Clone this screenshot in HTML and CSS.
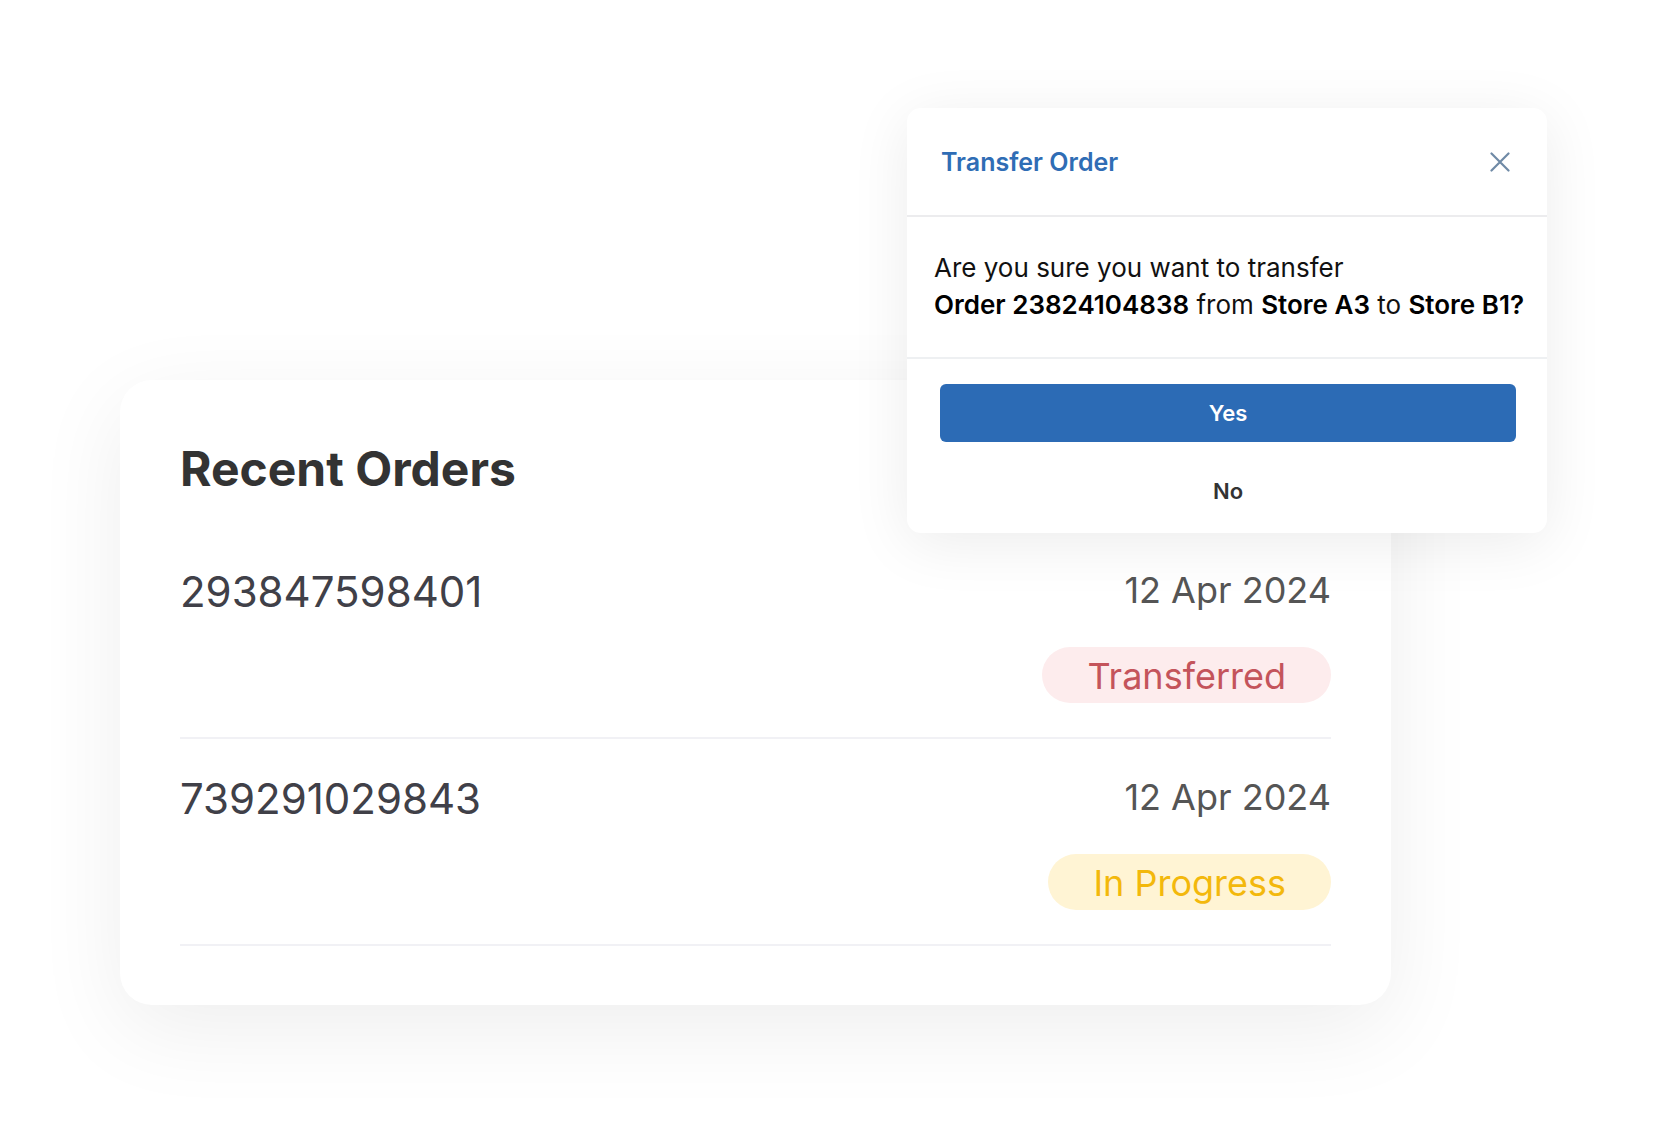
FILE: index.html
```html
<!DOCTYPE html>
<html>
<head>
    <title>Recent Orders</title>
    <link rel="stylesheet" href="styles.css">
</head>
<body>
    <div class="scene">
        <section class="orders-card">
            <h1 class="orders-title">Recent Orders</h1>

            <div class="order-row">
                <div class="order-id">293847598401</div>
                <div class="order-meta">
                    <div class="order-date">12 Apr 2024</div>
                    <span class="status status-transferred">Transferred</span>
                </div>
            </div>

            <div class="order-row">
                <div class="order-id">739291029843</div>
                <div class="order-meta">
                    <div class="order-date">12 Apr 2024</div>
                    <span class="status status-progress">In Progress</span>
                </div>
            </div>
        </section>

        <div class="dialog">
            <div class="dialog-header">
                <h2>Transfer Order</h2>
                <button class="dialog-close" aria-label="Close">
                    <svg width="20" height="20" viewBox="0 0 20 20">
                        <path d="M1.5 1.5 L18.5 18.5 M18.5 1.5 L1.5 18.5" stroke="#6f8aa6" stroke-width="2.2" stroke-linecap="round" fill="none"/>
                    </svg>
                </button>
            </div>
            <div class="dialog-body">
                <p>Are you sure you want to transfer<br><b>Order 23824104838</b> from <b>Store A3</b> to <b>Store B1?</b></p>
            </div>
            <div class="dialog-actions">
                <button class="btn-yes">Yes</button>
                <button class="btn-no">No</button>
            </div>
        </div>
    </div>
</body>
</html>
```

FILE: styles.css
```css
body {
    margin: 0;
    background-color: #fff;
    font-family: Inter, "Noto Sans", sans-serif;
}
.scene {
    position: relative;
    width: 1668px;
    height: 1135px;
    padding: 380px 0 0 120px;
    box-sizing: border-box;
}
.orders-card {
    width: 1271px;
    box-sizing: border-box;
    padding: 60px 60px 59px;
    background-color: #fff;
    border-radius: 32px;
    box-shadow: 0 24px 90px rgba(0, 0, 0, 0.07);
}
.orders-title {
    margin: 0 0 34px;
    font-size: 48px;
    line-height: 58px;
    font-weight: 700;
    color: #333;
}
.order-row {
    display: flex;
    justify-content: space-between;
    align-items: flex-start;
    padding: 37px 0 34px;
    border-bottom: 2px solid #f1f1f5;
}
.order-id {
    margin-top: -2px;
    font-size: 42px;
    line-height: 1.2;
    color: #404048;
}
.order-meta {
    display: flex;
    flex-direction: column;
    align-items: flex-end;
    gap: 35px;
}
.order-date {
    font-size: 36px;
    line-height: 1.2;
    color: #555;
}
.status {
    font-size: 36px;
    line-height: 54px;
    padding: 2px 45px 0;
    border-radius: 28px;
}
.status-transferred {
    background-color: #fdeced;
    color: #c4545b;
}
.status-progress {
    background-color: #fff4d4;
    color: #f3b80c;
}

/* transfer dialog, sits over the card */
.dialog {
    position: absolute;
    left: 907px;
    top: 108px;
    width: 640px;
    background-color: #fff;
    border-radius: 14px;
    box-shadow: 0 10px 60px rgba(0, 0, 0, 0.08);
}
.dialog-header {
    display: flex;
    justify-content: space-between;
    align-items: center;
    height: 107px;
    padding: 0 37px 0 34px;
    border-bottom: 2px solid #ececee;
}
.dialog-header h2 {
    margin: 0;
    font-size: 25px;
    line-height: 30px;
    font-weight: 600;
    color: #2f6db5;
}
.dialog-close {
    display: flex;
    padding: 0;
    border: none;
    background: none;
    cursor: pointer;
}
.dialog-body {
    padding: 32px 16px 34px 27px;
    border-bottom: 2px solid #eef0f2;
}
.dialog-body p {
    margin: 0;
    font-size: 26px;
    line-height: 37px;
    color: #111;
}
.dialog-body b {
    font-weight: 600;
    color: #000;
}
.dialog-actions {
    display: flex;
    flex-direction: column;
    gap: 20px;
    padding: 25px 31px 13px 33px;
}
.dialog-actions button {
    height: 58px;
    border: none;
    font-family: inherit;
    font-size: 22px;
    font-weight: 600;
    cursor: pointer;
}
.btn-yes {
    background-color: #2c6bb5;
    color: #fff;
    border-radius: 6px;
}
.btn-no {
    background: none;
    color: #333;
}
```
